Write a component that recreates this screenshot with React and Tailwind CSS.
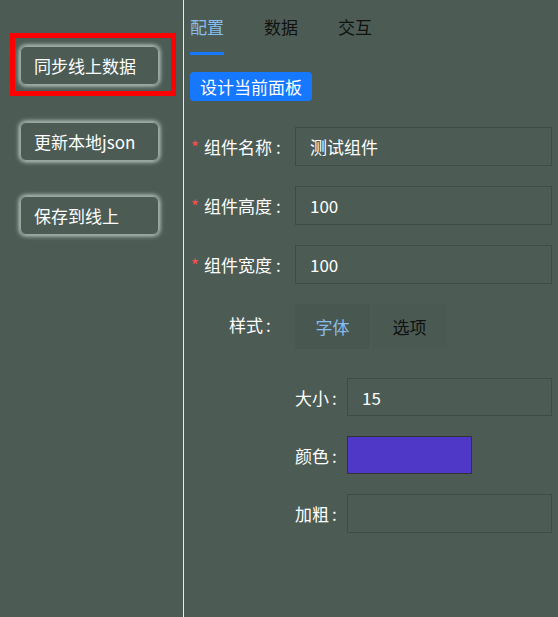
export default function App() {
  const font = { fontFamily: '"Noto Sans CJK SC", "Noto Sans", sans-serif' }

  const rows = [
    { label: '组件名称', value: '测试组件' },
    { label: '组件高度', value: '100' },
    { label: '组件宽度', value: '100' },
  ]

  return (
    <div
      className="flex w-[558px] h-[617px] bg-[#4c5c55] text-white text-[17px] leading-none overflow-hidden"
      style={font}
    >
      {/* sidebar */}
      <div className="w-[184px] shrink-0 border-r border-[#e8ece9] pt-[33px] pl-[10px]">
        <div className="w-[166px] h-[63px] border-[5px] border-[#ff0000] pl-[5px] pt-[8px]">
          <SideButton>同步线上数据</SideButton>
        </div>
        <div className="pl-[10px] mt-[26px]">
          <SideButton>更新本地json</SideButton>
        </div>
        <div className="pl-[10px] mt-[35px]">
          <SideButton>保存到线上</SideButton>
        </div>
      </div>

      {/* main */}
      <div className="flex-1 pl-[6px] pr-[6px]">
        <div className="flex gap-[40px] h-[55px]">
          <div className="flex flex-col justify-between pt-[18px] text-[#86bdf0]">
            <span>配置</span>
            <span className="block h-[3px] w-full bg-[#1677ff]" />
          </div>
          <div className="pt-[18px] text-[#111]">数据</div>
          <div className="pt-[18px] text-[#111]">交互</div>
        </div>

        <div className="mt-[17px]">
          <button className="h-[29px] px-[10px] rounded-[4px] bg-[#1677ff] text-white text-[17px]">
            设计当前面板
          </button>
        </div>

        <div className="mt-[26px] flex flex-col gap-[20px]">
          {rows.map((r) => (
            <div key={r.label} className="flex items-center">
              <div className="w-[105px] flex items-center">
                <span className="text-[#ff4d4f] w-[14px] pl-[1px]">*</span>
                <span>{r.label}</span>
                <span className="ml-[4px]">:</span>
              </div>
              <div className="flex-1 h-[39px] border border-[#3d4c45] flex items-center pl-[14px]">
                {r.value}
              </div>
            </div>
          ))}
        </div>

        <div className="mt-[20px] flex items-start">
          <div className="w-[105px] pl-[39px] pt-[12px]">
            样式<span className="ml-[3px]">:</span>
          </div>
          <div className="flex gap-[2px]">
            <div className="w-[75px] h-[45px] flex items-center justify-center bg-[#48574f] text-[#86bdf0]">
              字体
            </div>
            <div className="w-[75px] h-[45px] flex items-center justify-center bg-[#4a5a52] text-[#111]">
              选项
            </div>
          </div>
        </div>

        <div className="mt-[29px] pl-[105px] flex flex-col gap-[20px]">
          <div className="flex items-center">
            <span className="w-[52px]">大小<span className="ml-[3px]">:</span></span>
            <div className="flex-1 h-[38px] border border-[#3d4c45] flex items-center pl-[14px]">15</div>
          </div>
          <div className="flex items-center">
            <span className="w-[52px]">颜色<span className="ml-[3px]">:</span></span>
            <div className="w-[125px] h-[38px] border border-[#333] bg-[#4f37c8]" />
          </div>
          <div className="flex items-center">
            <span className="w-[52px]">加粗<span className="ml-[3px]">:</span></span>
            <div className="flex-1 h-[39px] border border-[#3d4c45]" />
          </div>
        </div>
      </div>
    </div>
  )
}

function SideButton({ children }) {
  return (
    <button className="w-[139px] h-[39px] rounded-[6px] border border-[#9aa7a1] shadow-[0_0_4px_1px_#c9d3ce] text-left pl-[13px] text-white text-[17px]">
      {children}
    </button>
  )
}
